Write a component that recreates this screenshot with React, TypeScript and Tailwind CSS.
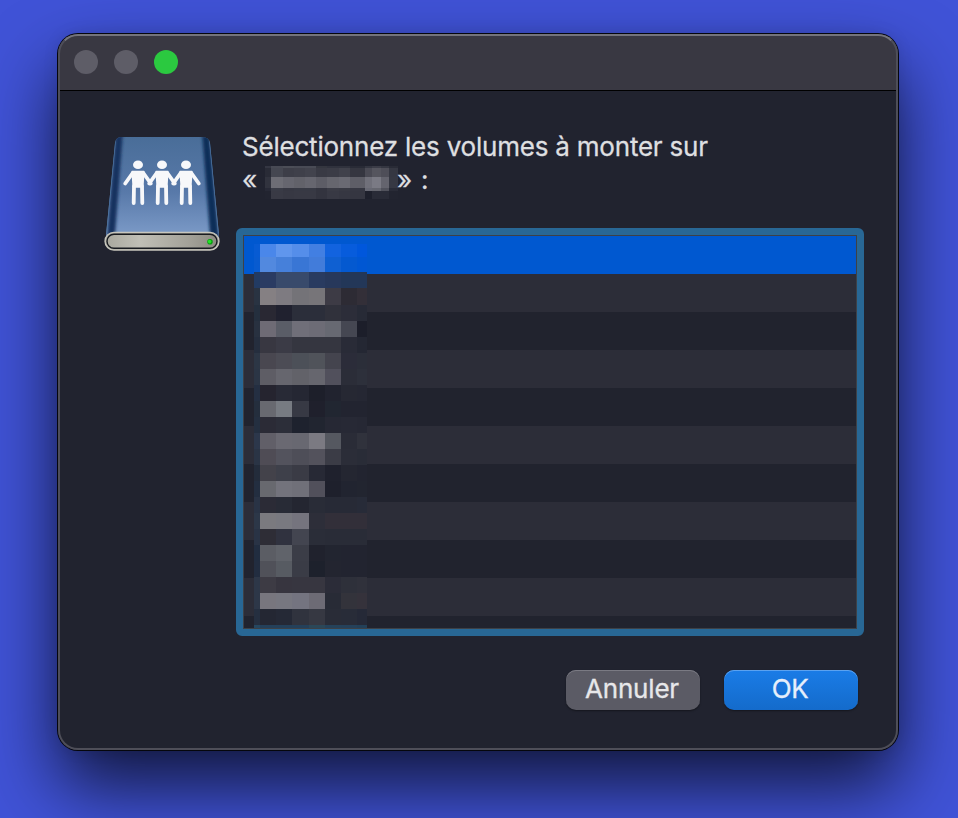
const volumeRows = Array.from({ length: 11 }, (_, i) => i);

const columns = [6, 16, 16, 17, 16, 16, 16, 10];

// Height of each band followed by the colour of every cell, left to right.
const mosaic: [number, string[]][] = [
  [13, ['#075bd3', '#4a87ea', '#6096ed', '#558eea', '#427fe2', '#1263df', '#075cdc', '#0057dc']],
  [15, ['#085bd0', '#5289df', '#4680da', '#3976d5', '#427cda', '#0f60d2', '#0459d0', '#0057d3']],
  [16, ['#223b63', '#2a3b62', '#384a6b', '#384a6b', '#293b60', '#27385b', '#233758', '#233758']],
  [17, ['#293342', '#858083', '#7e7b81', '#747378', '#777579', '#3d3b45', '#2d2b34', '#332f38']],
  [16, ['#242f3e', '#292833', '#20212f', '#2b2e3a', '#2b2e3a', '#30313b', '#2c2d39', '#272a36']],
  [16, ['#283140', '#6e6b75', '#5a5d67', '#706f79', '#6d6c76', '#676972', '#454752', '#1c1e2a']],
  [16, ['#252e3e', '#383741', '#3b3b46', '#353640', '#353640', '#353640', '#292b37', '#242733']],
  [16, ['#2c3645', '#494750', '#4c4c55', '#4c5058', '#50535a', '#44444e', '#2b2c39', '#2b2e39']],
  [16, ['#2b3545', '#5e5d65', '#66666e', '#626269', '#66666e', '#51505c', '#2b2d38', '#2d303b']],
  [16, ['#242f42', '#25242f', '#282a36', '#252733', '#1d1f2a', '#21232f', '#262833', '#252733']],
  [16, ['#242e3d', '#686970', '#777b82', '#373944', '#1f202c', '#212631', '#222430', '#222430']],
  [16, ['#242f40', '#2b2b36', '#2c2e39', '#1e222e', '#212530', '#262834', '#272935', '#262834']],
  [16, ['#2c374b', '#615f68', '#6a6972', '#686871', '#7b7a82', '#555860', '#2a2c37', '#30323c']],
  [16, ['#2a3445', '#4f4c55', '#53535d', '#4e4e58', '#53525c', '#3b3c46', '#2b2d38', '#292c37']],
  [16, ['#232c3b', '#43424a', '#3e404a', '#3a3b45', '#272935', '#1f212d', '#242631', '#222430']],
  [16, ['#232e40', '#68696f', '#73737c', '#707079', '#51505b', '#1e202c', '#212430', '#222530']],
  [16, ['#293345', '#2b2b36', '#282b36', '#242631', '#292c37', '#272a36', '#272a36', '#272b38']],
  [16, ['#2c3748', '#7b7a7f', '#797980', '#75747e', '#2d2e39', '#322f39', '#322f39', '#322f39']],
  [16, ['#293345', '#2e2d36', '#30323f', '#434550', '#2a2d38', '#292c37', '#292c37', '#292c37']],
  [16, ['#212d40', '#5b5d64', '#60636a', '#3b3d47', '#20222d', '#222530', '#222430', '#222430']],
  [16, ['#222d40', '#505159', '#575b62', '#3a3c46', '#1d212c', '#232530', '#222430', '#222430']],
  [16, ['#2d3748', '#3d3b44', '#37353f', '#373640', '#373640', '#2b2c38', '#2e303a', '#30313b']],
  [16, ['#2d3748', '#78767e', '#777780', '#747480', '#6d6b75', '#282b36', '#33333b', '#35323b']],
  [16, ['#252f40', '#242733', '#252936', '#30333e', '#363842', '#292c37', '#282c38', '#252937']],
  [3, ['#264760', '#24405a', '#24405a', '#24405a', '#2b4758', '#25425a', '#25415a', '#234058']],
];

const nameColumns = [6, 12, 11, 11, 11, 11, 12, 11, 15, 7, 9, 8, 9];
const nameMosaic: [number, string[]][] = [
  [2, ['#343642', '#484a54', '#4c4e57', '#494b55', '#494b55', '#34363f', '#30323d', '#30323d', '#292b36', '#343641', '#3b3c47', '#343641', '#292b36']],
  [9, ['#292b36', '#454751', '#3d3e48', '#3f404a', '#42434d', '#393a44', '#3b3c46', '#40414b', '#353640', '#4a4a54', '#55555e', '#4e4e58', '#353742']],
  [11, ['#31333e', '#6d6d75', '#66666f', '#62626a', '#66666f', '#5d5d66', '#66666e', '#6a6a73', '#5e5e67', '#70707a', '#7a7a84', '#64646e', '#363843']],
  [3, ['#272936', '#393b46', '#363742', '#373944', '#373944', '#33343f', '#3a3b45', '#383943', '#363742', '#676873', '#65666f', '#51525c', '#292b37']],
  [8, ['#222430', '#393a45', '#373843', '#383944', '#383944', '#33343f', '#383944', '#363742', '#353641', '#1e202c', '#292b37', '#292b37', '#222430']],
];

function Mosaic({ widths, bands }: { widths: number[]; bands: [number, string[]][] }) {
  return (
    <div className="flex flex-col" aria-hidden="true">
      {bands.map(([height, cells], r) => (
        <div key={r} className="flex" style={{ height }}>
          {cells.map((color, c) => (
            <div key={c} className="shrink-0" style={{ width: widths[c], backgroundColor: color }} />
          ))}
        </div>
      ))}
    </div>
  );
}

function Person({ x }: { x: number }) {
  return (
    <g transform={`translate(${x} 0)`} fill="#f7f8fa" stroke="#f7f8fa" strokeLinecap="round" strokeLinejoin="round">
      <ellipse cx="0" cy="28.8" rx="5" ry="4.3" stroke="none" />
      <path d="M-5.8 35.5H5.8L4.8 51H-4.8Z" strokeWidth="1.5" />
      <path d="M-5.3 37L-12.8 47.5M5.3 37L12.8 47.5" strokeWidth="3.8" />
      <path d="M-4 50L-4.3 67M4 50L4.3 67" strokeWidth="3.8" />
    </g>
  );
}

function ServerDrive() {
  return (
    <svg className="block h-[120px] w-[120px]" viewBox="0 0 120 120">
      <defs>
        <linearGradient id="face" x1="0" y1="0" x2="0" y2="1">
          <stop offset="0" stopColor="#496d98" />
          <stop offset=".5" stopColor="#5879a9" />
          <stop offset="1" stopColor="#86a4d0" />
        </linearGradient>
        <linearGradient id="metal" x1="0" x2="1">
          <stop offset="0" stopColor="#aaa99f" />
          <stop offset=".3" stopColor="#c0bfb6" />
          <stop offset=".75" stopColor="#a3a198" />
          <stop offset="1" stopColor="#8c8b82" />
        </linearGradient>
        <clipPath id="body">
          <path d="M19 1H100Q107 1 108 7L117 99Q117 108 108 109H13Q3 107 4 99L13 7Q14 1 19 1Z" />
        </clipPath>
        <filter id="soft" x="-50%" y="-10%" width="200%" height="120%">
          <feGaussianBlur stdDeviation="1.7" />
        </filter>
      </defs>
      <g clipPath="url(#body)">
        <rect width="120" height="112" fill="url(#face)" />
        <path d="M14 -4H21L12 112H4Z" fill="#12325f" filter="url(#soft)" />
        <path d="M100 -4H107L118 112H109Z" fill="#0f2d59" filter="url(#soft)" />
        <path d="M13.5 3L4.5 97M107.5 3L116.5 97" stroke="#4a709c" strokeWidth="1.2" />
      </g>
      <rect x="3" y="96.3" width="114" height="17.8" rx="8.9" fill="#aaa99f" stroke="#c7c6bd" strokeWidth="1.3" />
      <rect x="5" y="98.2" width="110" height="14" rx="7" fill="url(#metal)" stroke="#181b20" strokeWidth="1.4" />
      <circle cx="108" cy="105.8" r="2.8" fill="#0c9e12" />
      <circle cx="107.6" cy="105.6" r="1.8" fill="#22e526" />
      <Person x={36} />
      <Person x={60} />
      <Person x={84} />
    </svg>
  );
}

export default function App() {
  return (
    <div className="flex h-[818px] w-[958px] items-start overflow-hidden bg-[#4053d7] px-[58px] pt-[34px] font-['Inter','Liberation_Sans',sans-serif]">
      <div className="relative flex h-[716px] w-[840px] flex-col rounded-[20px] bg-[#21232f] shadow-[0_0_0_1px_#05060c,0_36px_72px_rgba(0,0,0,0.72),0_0_16px_rgba(0,0,0,0.1)]">
        <div className="flex h-[57px] shrink-0 gap-4 rounded-t-[20px] border-b border-black bg-[#393842] pt-4 pl-4">
          <div className="size-6 rounded-full bg-[#5e5d67]" />
          <div className="size-6 rounded-full bg-[#5e5d67]" />
          <div className="size-6 rounded-full bg-[#2bc940]" />
        </div>

        <div className="flex pt-[39px] pl-11">
          <div className="w-[134px] shrink-0 pt-[6px]">
            <ServerDrive />
          </div>
          <div className="flex w-[628px] flex-col">
            <div className="h-[98px] pt-px pl-[6px] text-[26px] leading-8 whitespace-nowrap text-[#dedfe0] [-webkit-text-stroke:0.3px]">
              <p className="tracking-[-0.21px]">Sélectionnez les volumes à monter sur</p>
              <div className="flex pt-px">
                <span className="w-[23px] shrink-0">«</span>
                <div className="w-[132px] shrink-0 pt-[2px]">
                  <Mosaic widths={nameColumns} bands={nameMosaic} />
                </div>
                <span className="[word-spacing:1.5px]">» :</span>
              </div>
            </div>

            <div className="h-[408px] rounded-[6px] border-[7px] border-[#286795]">
              <div className="relative h-[394px] overflow-hidden border border-[#3d4147]">
                {volumeRows.map((i) => (
                  <div
                    key={i}
                    className={i === 0 ? 'h-[38px] bg-[#0058d0]' : i % 2 ? 'h-[38px] bg-[#2c2d38]' : 'h-[38px] bg-[#21232e]'}
                  />
                ))}
                <div className="absolute top-2 left-[10px]">
                  <Mosaic widths={columns} bands={mosaic} />
                </div>
              </div>
            </div>

            <div className="flex justify-end gap-6 pt-[34px] pr-[6px] text-[26px] leading-[36px] [-webkit-text-stroke:0.3px]">
              <button className="h-10 w-[134px] rounded-[10px] bg-[#5b5b65] pr-[2px] pb-[2px] tracking-[-0.2px] text-[#e7e7e9] shadow-[inset_0_1px_0_#7a7a83,0_1px_2px_rgba(0,0,0,0.4)]">
                Annuler
              </button>
              <button className="h-10 w-[134px] rounded-[10px] bg-linear-to-b from-[#1a7ce7] to-[#146bcb] pr-[2px] pb-[2px] tracking-[-0.5px] text-[#e6effb] shadow-[inset_0_1px_0_#5ba2f0,0_1px_2px_rgba(0,0,0,0.4)]">
                OK
              </button>
            </div>
          </div>
        </div>
        <div className="pointer-events-none absolute inset-0 rounded-[20px] border-2 border-[#4e4e58] border-t-[#74747b]" />
      </div>
    </div>
  );
}
